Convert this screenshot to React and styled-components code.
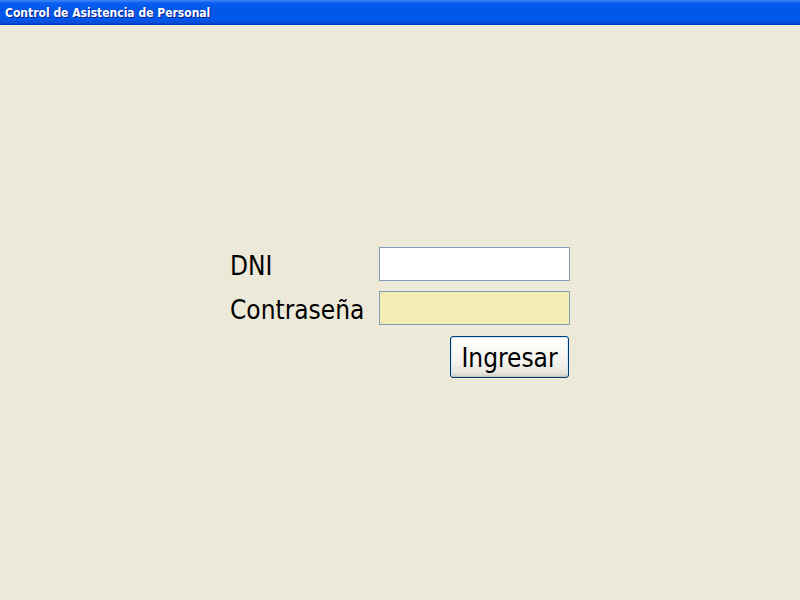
import React, { useState } from 'react';
import styled, { createGlobalStyle } from 'styled-components';

const GlobalStyle = createGlobalStyle`
  html, body {
    margin: 0;
    padding: 0;
    background: #ece9d8;
  }
  #root {
    width: 800px;
    height: 600px;
  }
`;

const Window = styled.div`
  width: 800px;
  height: 600px;
  display: flex;
  flex-direction: column;
  background: #ece9d8;
  overflow: hidden;
`;

const TitleBar = styled.div`
  height: 25px;
  flex: 0 0 25px;
  display: flex;
  align-items: center;
  padding-left: 5px;
  box-sizing: border-box;
  background: linear-gradient(
    to bottom,
    #3d8af7 0%,
    #0a5ff0 12%,
    #0055e5 40%,
    #0058ee 75%,
    #0a4fd8 90%,
    #0036c2 100%
  );
  color: #fff;
  font-family: "DejaVu Sans Condensed", "DejaVu Sans", sans-serif;
  font-weight: bold;
  font-size: 12px;
  text-shadow: 1px 1px 0 #0a1e8c;
`;

const Content = styled.div`
  flex: 1;
  padding: 222px 0 0 230px;
`;

const LoginForm = styled.form`
  display: grid;
  grid-template-columns: 149px 191px;
  row-gap: 10px;
  align-items: center;
  font-family: "DejaVu Sans Condensed", "DejaVu Sans", sans-serif;
`;

const Label = styled.label`
  display: block;
  height: 34px;
  box-sizing: border-box;
  padding-top: 4px;
  font-size: 26px;
  color: #000;
  line-height: 30px;
  white-space: nowrap;
`;

const Field = styled.input`
  width: 191px;
  height: 34px;
  box-sizing: border-box;
  border: 1px solid #7f9db9;
  background: ${p => (p.$highlight ? '#f5ecb4' : '#fff')};
  font-size: 18px;
  padding: 0 4px;
  outline: none;
`;

const ButtonCell = styled.div`
  grid-column: 2;
  display: flex;
  justify-content: flex-end;
  padding-top: 1px;
  padding-right: 1px;
`;

const Button = styled.button`
  width: 119px;
  height: 42px;
  box-sizing: border-box;
  border: 1px solid #003c74;
  border-radius: 3px;
  background: linear-gradient(to bottom, #ffffff 0%, #f4f3ee 60%, #e8e7df 88%, #d6d0c5 100%);
  box-shadow: inset 0 -1px 0 #c9c5b6, inset 1px 0 0 #cee7ff, inset -1px 0 0 #cee7ff, inset 0 1px 0 #cee7ff;
  font-family: "DejaVu Sans Condensed", "DejaVu Sans", sans-serif;
  font-size: 26px;
  line-height: 38px;
  color: #000;
  padding: 1px 0 0;
  cursor: pointer;
`;

export default function App() {
  const [dni, setDni] = useState('');
  const [pass, setPass] = useState('');
  return (
    <>
      <GlobalStyle />
      <Window>
        <TitleBar>Control de Asistencia de Personal</TitleBar>
        <Content>
          <LoginForm onSubmit={e => e.preventDefault()}>
            <Label htmlFor="dni">DNI</Label>
            <Field id="dni" value={dni} onChange={e => setDni(e.target.value)} />
            <Label htmlFor="pass">Contraseña</Label>
            <Field id="pass" type="password" $highlight value={pass} onChange={e => setPass(e.target.value)} />
            <ButtonCell>
              <Button type="submit">Ingresar</Button>
            </ButtonCell>
          </LoginForm>
        </Content>
      </Window>
    </>
  );
}
